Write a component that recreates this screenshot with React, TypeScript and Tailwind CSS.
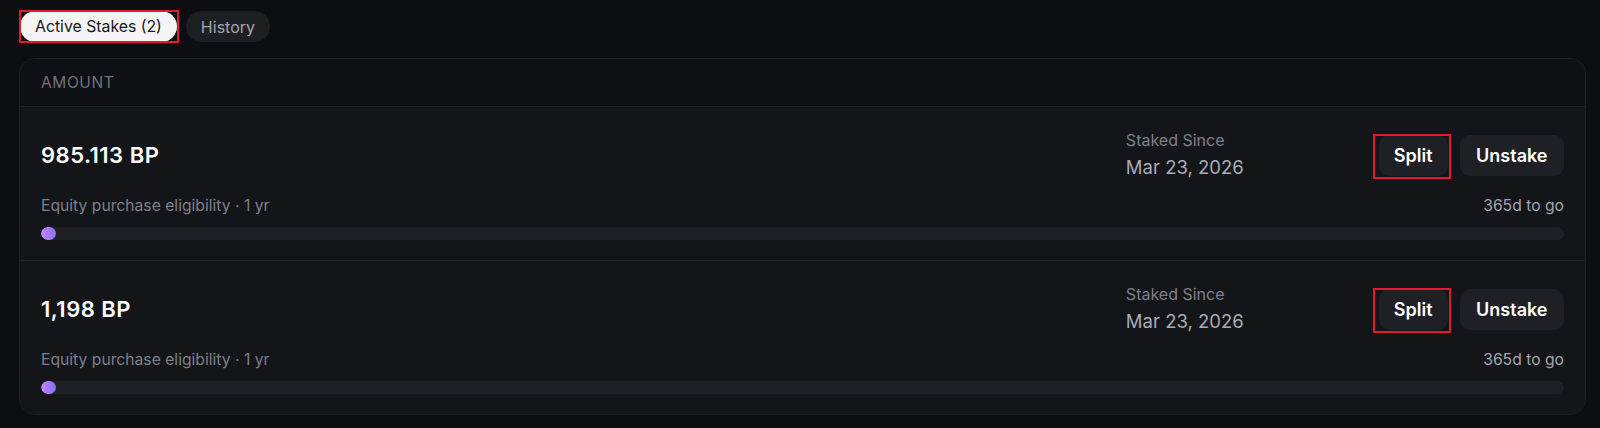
import { useState } from "react";

type Stake = {
  id: number;
  amount: string;
  since: string;
  remaining: string;
  progress: number;
};

const stakes: Stake[] = [
  { id: 1, amount: "985.113 BP", since: "Mar 23, 2026", remaining: "365d to go", progress: 0 },
  { id: 2, amount: "1,198 BP", since: "Mar 23, 2026", remaining: "365d to go", progress: 0 },
];

// red highlight box drawn over an element
function Highlight({ className }: { className: string }) {
  return <div className={`absolute border-2 border-[#e3192f] pointer-events-none ${className}`} />;
}

function StakeRow({ stake, last }: { stake: Stake; last: boolean }) {
  return (
    <div className={`flex flex-col px-[21px] pt-[23px] pb-[20px] bg-[#141519] ${last ? "" : "border-b border-[#202127]"}`}>
      <div className="flex items-center justify-between">
        <div className="text-[22px] font-semibold tracking-[0.5px] text-white">{stake.amount}</div>
        <div className="flex items-center">
          <div className="w-[253px] flex flex-col">
            <span className="text-[16px] leading-5 text-[#7d808b]">Staked Since</span>
            <span className="mt-[3px] text-[18.5px] leading-7 text-[#a9acb6]">{stake.since}</span>
          </div>
          <div className="flex items-center gap-3">
            <div className="relative">
              <button className="h-[41px] px-[15px] rounded-[10px] bg-[#1f2025] text-[18px] font-semibold text-white">
                Split
              </button>
              <Highlight className="-left-[6px] -right-[3px] -top-[1px] -bottom-[3px]" />
            </div>
            <button className="h-[41px] px-[16.5px] rounded-[10px] bg-[#1f2025] text-[18px] font-semibold text-white">
              Unstake
            </button>
          </div>
        </div>
      </div>

      <div className="mt-[15px] flex items-center justify-between text-[15.7px] leading-5">
        <span className="text-[#7d808b]">Equity purchase eligibility · 1 yr</span>
        <span className="text-[#a3a6af]">{stake.remaining}</span>
      </div>

      <div className="mt-[11px] h-[13px] w-full rounded-full bg-[#1f2025] overflow-hidden">
        <div
          className="h-full min-w-[15px] rounded-full bg-gradient-to-r from-[#c584fb] to-[#8a6ff1]"
          style={{ width: `${stake.progress}%` }}
        />
      </div>
    </div>
  );
}

export default function App() {
  const [tab, setTab] = useState<"active" | "history">("active");

  return (
    <div className="min-h-[428px] bg-[#0d0e12] pl-[20px] pr-[14px] pt-[11px] pb-4 font-['Inter',sans-serif]">
      {/* Tabs */}
      <div className="flex items-center gap-[9px] mb-4">
        <div className="relative">
          <button
            onClick={() => setTab("active")}
            className={`h-[31px] px-[15px] rounded-full text-[15.8px] ${
              tab === "active" ? "bg-[#f4f4f5] text-[#18181b]" : "bg-[#1e1f23] text-[#a3a6b0]"
            }`}
          >
            Active Stakes (2)
          </button>
          <Highlight className="-left-[1px] -right-[2px] -top-[1px] -bottom-[1px]" />
        </div>
        <button
          onClick={() => setTab("history")}
          className={`h-[31px] px-[15px] rounded-full text-[16px] ${
            tab === "history" ? "bg-[#f4f4f5] text-[#18181b]" : "bg-[#1e1f23] text-[#a3a6b0]"
          }`}
        >
          History
        </button>
      </div>

      {/* Stakes table */}
      <div className="-ml-px rounded-2xl border border-[#1e1f24] overflow-hidden">
        <div className="h-[48px] flex items-center px-[21px] bg-[#0f1014] border-b border-[#202127]">
          <span className="text-[15.5px] uppercase tracking-[0.6px] text-[#6f727d]">Amount</span>
        </div>
        {stakes.map((s, i) => (
          <StakeRow key={s.id} stake={s} last={i === stakes.length - 1} />
        ))}
      </div>
    </div>
  );
}
